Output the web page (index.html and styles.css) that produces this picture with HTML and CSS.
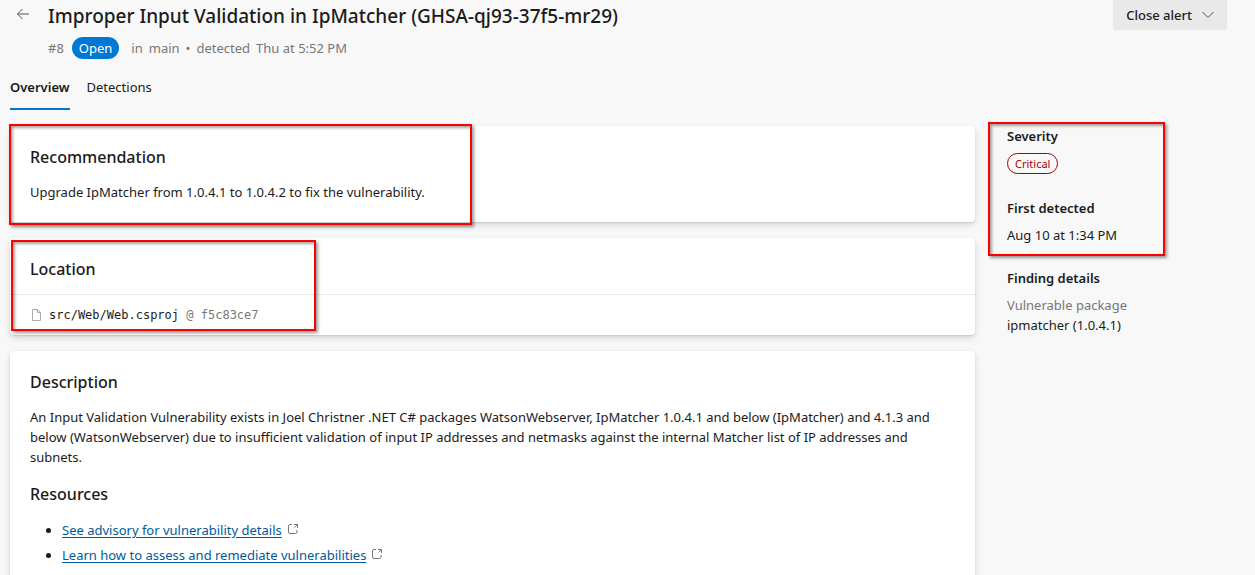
FILE: index.html
```html
<!DOCTYPE html>
<html lang="en">
<head>
<meta charset="utf-8">
<title>Improper Input Validation in IpMatcher</title>
<link rel="stylesheet" href="styles.css">
</head>
<body>
<header class="header">
  <button class="back" aria-label="Back"><svg width="14" height="12" viewBox="0 0 14 12"><path d="M13 6H1.5M6.5 1L1.5 6l5 5"/></svg></button>
  <div class="heading">
    <h1 class="title">Improper Input Validation in IpMatcher (GHSA-qj93-37f5-mr29)</h1>
    <div class="meta"><span>#8</span><span class="pill">Open</span><span class="where"><span>in</span><span>main</span><span>•</span><span>detected</span><span class="when">Thu at 5:52 PM</span></span></div>
  </div>
  <button class="close">Close alert <svg width="12" height="8" viewBox="0 0 12 8"><path d="M.5 1L6 6.5 11.5 1"/></svg></button>
</header>
<nav class="tabs">
  <a class="tab active" href="#overview">Overview</a>
  <a class="tab" href="#detections">Detections</a>
</nav>
<div class="layout">
  <main class="main" id="overview">
    <section class="card body recommendation">
      <h2>Recommendation</h2>
      <p>Upgrade IpMatcher from 1.0.4.1 to 1.0.4.2 to fix the vulnerability.</p>
      <div class="mark"></div>
    </section>
    <section class="card location">
      <h2 class="card-head">Location</h2>
      <div class="file">
        <svg width="9" height="12" viewBox="0 0 9 12"><path d="M.5.5h5l3 3v8h-8zM5.5.5v3h3"/></svg>
        <span class="path">src/Web/Web.csproj <span class="commit">@ f5c83ce7</span></span>
      </div>
      <div class="mark"></div>
    </section>
    <section class="card body">
      <h2>Description</h2>
      <p>An Input Validation Vulnerability exists in Joel Christner .NET C# packages WatsonWebserver, IpMatcher 1.0.4.1 and below (IpMatcher) and 4.1.3 and below (WatsonWebserver) due to insufficient validation of input IP addresses and netmasks against the internal Matcher list of IP addresses and subnets.</p>
      <h2 class="next">Resources</h2>
      <ul class="links">
        <li><a href="#advisory">See advisory for vulnerability details</a><svg width="10" height="11" viewBox="0 0 10 11"><path d="M4 .5H2Q.5.5.5 2v6q0 1.500 1.500 1.500h5.500q1.500 0 1.500-1.500V6M6 .5h3.500V4M9.500.5L6.500 3.500"/></svg></li>
        <li><a href="#learn">Learn how to assess and remediate vulnerabilities</a><svg width="10" height="11" viewBox="0 0 10 11"><path d="M4 .5H2Q.5.5.5 2v6q0 1.500 1.500 1.500h5.500q1.500 0 1.500-1.500V6M6 .5h3.500V4M9.500.5L6.500 3.500"/></svg></li>
      </ul>
    </section>
  </main>
  <aside class="side">
    <section class="severity">
      <h3>Severity</h3>
      <span class="critical">Critical</span>
    </section>
    <section class="detected">
      <h3>First detected</h3>
      <p>Aug 10 at 1:34 PM</p>
    </section>
    <section>
      <h3>Finding details</h3>
      <p class="label">Vulnerable package</p>
      <p>ipmatcher (1.0.4.1)</p>
    </section>
    <div class="mark"></div>
  </aside>
</div>
</body>
</html>
```
FILE: styles.css
```css
* { box-sizing: border-box; }
body {
  margin: 0;
  height: 100vh;
  overflow: hidden;
  background: #f8f8f8;
  color: #1b1b1b;
  font: 13px/20px "Noto Sans", "Open Sans", sans-serif;
}
h1, h2, h3, p, ul { margin: 0; }
svg { fill: none; stroke: #555; }
button { border: 0; padding: 0; font: inherit; color: inherit; }
.header { display: flex; align-items: flex-start; padding: 0 28px 0 16px; }
.back { width: 14px; height: 28px; background: none; display: flex; align-items: center; }
.heading { flex: 1; padding: 2px 0 0 18px; }
.title { font-size: 19px; line-height: 28px; font-weight: 500; }
.meta { display: flex; align-items: center; gap: 8px; margin-top: 7px; color: #777; line-height: 22px; }
.pill { background: #0078d4; color: #fff; border-radius: 11px; padding: 0 7px; }
.where { display: flex; gap: 6px; margin-left: 4px; }
.close {
  display: flex; align-items: center; justify-content: space-between; gap: 10px;
  height: 30px; padding: 0 13px; background: #e9e9e9; border-radius: 0 0 2px 2px;
  font-weight: 500;
}
.tabs { display: flex; gap: 17px; padding: 18px 10px 0; }
.tab { color: inherit; text-decoration: none; height: 33px; border-bottom: 2px solid transparent; }
.tab.active { font-weight: 600; border-color: #0078d4; }
.layout { display: flex; align-items: flex-start; gap: 32px; padding: 16px 28px 0 10px; }
.main { flex: 1; display: flex; flex-direction: column; gap: 16px; }
.card { position: relative; background: #fff; border-radius: 4px; box-shadow: 0 3px 7px rgba(0,0,0,.13), 0 1px 2px rgba(0,0,0,.11); }
.body { padding: 20px; }
h2 { font-size: 16px; line-height: 22px; font-weight: 500; }
.body p { margin: 14px 12px 0 0; }
.body .next { margin-top: 16px; }
.card-head { padding: 20px 20px 14px; border-bottom: 1px solid #eaeaea; }
.file { display: flex; align-items: center; gap: 8px; height: 40px; padding: 0 22px; }
.file svg { stroke: #aaa; }
.path { font: 12px/20px "DejaVu Sans Mono", monospace; }
.commit { color: #777; }
.links { padding: 15px 0 0 32px; display: flex; flex-direction: column; gap: 5px; }
.links a { color: #005a9e; text-underline-offset: 2px; }
.links svg { margin-left: 6px; stroke: #777; }
.side { position: relative; flex: 0 0 220px; }
h3 { font-size: 13px; line-height: 20px; font-weight: 600; }
.critical {
  display: block; width: fit-content; margin-top: 7px; padding: 0 7px; border: 1px solid #a80000; border-radius: 11px;
  color: #a80000; font-size: 11px; line-height: 19px;
}
.detected { margin: 24px 0 23px; }
.side p { margin-top: 7px; }
.side .label { color: #777; }
.side .label + p { margin-top: 0; }
.mark {
  position: absolute; border: 2px solid #f00; pointer-events: none;
  box-shadow: 2px 2px 3px rgba(0,0,0,.4), inset 2px 2px 3px rgba(0,0,0,.35);
}
.recommendation .mark { left: -1px; top: -2px; width: 463px; height: 101px; }
.location .mark { left: 1px; top: 2px; width: 305px; height: 91px; }
.side .mark { left: -19px; top: -4px; width: 177px; height: 134px; }
```
